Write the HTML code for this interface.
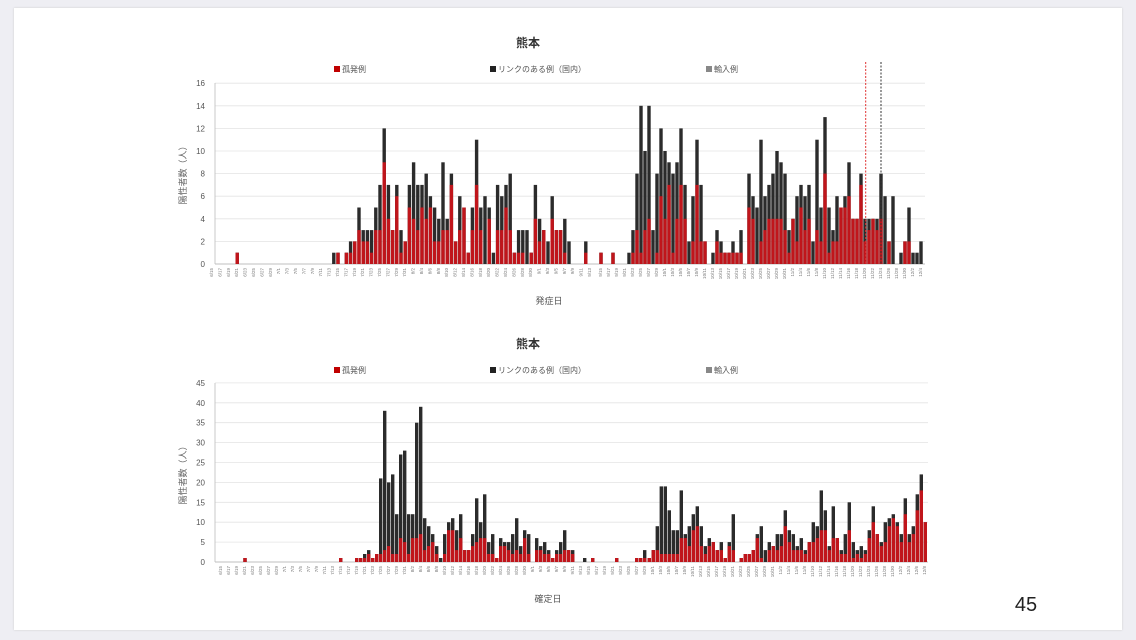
<!DOCTYPE html>
<html><head><meta charset="utf-8">
<style>
html,body{margin:0;padding:0;background:#eeeef3;}
body{width:1136px;height:640px;position:relative;overflow:hidden;font-family:"Liberation Sans","Noto Sans CJK JP",sans-serif;}
#slide{position:absolute;left:14px;top:8px;width:1108px;height:622px;background:#fff;box-shadow:0 0 2px #ccc;}
svg{position:absolute;left:0;top:0;}
</style></head><body>
<div id="slide"></div>
<svg id="s" width="1136" height="640" xmlns="http://www.w3.org/2000/svg" font-family="Liberation Sans, Noto Sans CJK JP, sans-serif">
<text x="528" y="47" font-size="12" font-weight="bold" text-anchor="middle" fill="#333">熊本</text>
<rect x="334" y="66" width="6" height="6" fill="#c00000"/><text x="342" y="72" font-size="8" fill="#555">孤発例</text>
<rect x="490" y="66" width="6" height="6" fill="#222"/><text x="498" y="72" font-size="8" fill="#555">リンクのある例（国内）</text>
<rect x="706" y="66" width="6" height="6" fill="#888"/><text x="714" y="72" font-size="8" fill="#555">輸入例</text>
<text x="549" y="304" font-size="9" text-anchor="middle" fill="#555">発症日</text>
<text transform="translate(186,173) rotate(-90)" font-size="9" text-anchor="middle" fill="#666">陽性者数（人）</text>
<text x="528" y="348" font-size="12" font-weight="bold" text-anchor="middle" fill="#333">熊本</text>
<rect x="334" y="367" width="6" height="6" fill="#c00000"/><text x="342" y="373" font-size="8" fill="#555">孤発例</text>
<rect x="490" y="367" width="6" height="6" fill="#222"/><text x="498" y="373" font-size="8" fill="#555">リンクのある例（国内）</text>
<rect x="706" y="367" width="6" height="6" fill="#888"/><text x="714" y="373" font-size="8" fill="#555">輸入例</text>
<text x="548" y="602" font-size="9" text-anchor="middle" fill="#555">確定日</text>
<text transform="translate(186,473) rotate(-90)" font-size="9" text-anchor="middle" fill="#666">陽性者数（人）</text>
<text x="1026" y="611" font-size="20" text-anchor="middle" fill="#222">45</text>
<g id="g"></g>
</svg>
<script>
(function(){
var g=document.getElementById("g"),h="";
function R(x,y,w,hh,c){h+='<rect x="'+x.toFixed(1)+'" y="'+y.toFixed(1)+'" width="'+w+'" height="'+Math.max(0,hh).toFixed(1)+'" fill="'+c+'"/>';}
function T(x,y,s,t,a,c,extra){h+='<text x="'+x+'" y="'+y+'" font-size="'+s+'" text-anchor="'+(a||"start")+'" fill="'+(c||"#555")+'" '+(extra||"")+'>'+t+'</text>';}
function dstr(d){var m=[30,31,31,30,31,30,31],mo=6,day=15+d;var i=0;while(day>m[i]){day-=m[i];i++;mo++;}return mo+"/"+day;}
var b0=264,u=11.3;
for(var v=0;v<=16;v+=2){var y=b0-v*u;h+='<line x1="215" x2="925" y1="'+y+'" y2="'+y+'" stroke="'+(v?"#e4e4e4":"#aaa")+'" stroke-width="0.8"/>';T(205,y+3,8,v,"end","#555");}
h+='<line x1="215" x2="215" y1="83" y2="264" stroke="#bbb" stroke-width="0.8"/>';
var tdata=[[6,1,1],[29,1,0],[30,1,1],[32,1,1],[33,2,1],[34,2,2],[35,5,3],[36,3,2],[37,3,2],[38,3,1],[39,5,3],[40,7,3],[41,12,9],[42,7,4],[43,3,3],[44,7,6],[45,3,1],[46,2,2],[47,7,5],[48,9,4],[49,7,3],[50,7,5],[51,8,4],[52,6,5],[53,5,2],[54,4,2],[55,9,3],[56,4,3],[57,8,7],[58,2,2],[59,6,3],[60,5,5],[61,1,1],[62,5,3],[63,11,7],[64,5,3],[65,6,0],[66,5,4],[67,1,0],[68,7,3],[69,6,3],[70,7,5],[71,8,3],[72,1,1],[73,3,1],[74,3,1],[75,3,0],[76,1,1],[77,7,4],[78,4,2],[79,3,3],[80,2,0],[81,6,4],[82,3,3],[83,3,3],[84,4,1],[85,2,0],[89,2,1],
[92,1,1],[95,1,1],[99,1,0],[100,3,1],[101,8,3],[102,14,1],[103,10,3],[104,14,4],[105,3,0],[106,8,1],[107,12,6],[108,10,4],[109,9,7],[110,8,1],[111,9,4],[112,12,7],[113,7,4],[114,2,0],[115,6,2],[116,11,7],[117,7,2],[118,2,2],[120,1,0],[121,3,2],[122,2,1],[123,1,1],[124,1,1],[125,2,1],[126,1,1],[127,3,1],[129,8,5],[130,6,4],[131,5,0],[132,11,2],[133,6,3],[134,7,4],[135,8,4],[136,10,4],[137,9,4],[138,8,3],[139,3,1],[140,4,4],[141,6,2],[142,7,5],[143,6,3],[144,7,4],[145,2,0],[146,11,3],[147,5,2],[148,13,8],[149,5,1],[150,3,2],[151,6,2],[152,5,5],[153,6,5],[154,9,6],[155,4,4],[156,4,4],[157,8,7],[158,4,2],[159,4,3],[160,4,4],[161,4,3],[162,8,4],[163,6,0],[164,2,2],[165,6,0],[167,1,0],[168,2,2],[169,5,2],[170,1,0],[171,1,0],[172,2,0]];
function xt(k){return k<92?212+4.2*k:601+4*(k-92);}
tdata.forEach(function(a){var x=xt(a[0])-1.7;R(x,b0-a[1]*u,3.4,a[1]*u,"#2b2b2b");R(x,b0-a[2]*u,3.4,a[2]*u,"#c0151b");});
for(var k=0;k<=172;k+=2){var x=xt(k)+1;T(0,0,4.5,dstr(k),"end","#777",'transform="translate('+x.toFixed(1)+',268) rotate(-90)"');}
h+='<line x1="865.7" x2="865.7" y1="62" y2="264" stroke="#e03030" stroke-width="1" stroke-dasharray="2,1.5"/>';
h+='<line x1="881" x2="881" y1="62" y2="264" stroke="#333" stroke-width="1" stroke-dasharray="2,1.5"/>';
var b1=562,u1=3.98;
for(var v=0;v<=45;v+=5){var y=b1-v*u1;h+='<line x1="215" x2="928" y1="'+y+'" y2="'+y+'" stroke="'+(v?"#e4e4e4":"#aaa")+'" stroke-width="0.8"/>';T(205,y+3,8,v,"end","#555");}
h+='<line x1="215" x2="215" y1="383" y2="562" stroke="#bbb" stroke-width="0.8"/>';
var b3=[[225,1,1],[512,1,1],[560,1,1],[572,1,1],[584,2,1],[596,3,2],[608,1,1],[620,2,2],[632,21,2],[644,38,3],[656,20,4],[668,22,2],[680,12,2],[692,27,6],[704,28,5],[716,12,2],[728,12,6],[740,35,6],[752,39,7],[764,11,3],[776,9,4],[788,7,5],[800,4,2],[812,1,0],[824,7,2],[836,10,8],[848,11,8],[860,8,3],[872,12,6],[884,3,3],[896,3,3],[908,7,4],[920,16,5],[932,10,6],[944,17,6],[956,5,2],[968,7,2],[980,1,1],[992,6,4],[1004,5,4],[1016,5,3],[1028,7,2],[1040,11,3],[1052,4,2],[1064,8,6],[1076,7,2],[1100,6,3],[1112,4,3],[1124,5,2],[1136,3,2],[1148,1,1],[1160,3,2],[1172,5,2],[1184,8,3],[1196,3,3],[1208,3,2],[1244,1,0],[1268,1,1],[1340,1,1],[1400,1,1],[1412,1,1],[1424,3,1]];
b3.forEach(function(a){var x=170+a[0]/3-1.7;R(x,b1-a[1]*u1,3.4,a[1]*u1,"#2b2b2b");R(x,b1-a[2]*u1,3.4,a[2]*u1,"#c0151b");});
var b4=[[148,1,1],[160,3,3],[172,9,3],[184,19,2],[196,19,2],[208,13,2],[220,8,2],[232,8,2],[244,18,6],[256,7,6],[268,9,4],[280,12,8],[292,14,9],[304,9,4],[316,4,2],[328,6,4],[340,5,5],[352,3,3],[364,5,3],[376,1,1],[388,5,4],[400,12,3],[424,1,1],[436,2,2],[448,2,2],[460,3,3],[472,7,6],[484,9,1],[496,3,0],[508,5,3],[520,4,4],[532,7,3],[544,7,4],[556,13,9],[568,8,5],[580,7,3],[592,4,3],[604,6,3],[616,3,2],[628,5,5],[640,10,5],[652,9,6],[664,18,8],[676,13,8],[688,4,3],[700,14,6],[712,6,6],[724,3,2],[736,7,2],[748,15,8],[760,5,1],[772,3,2],[784,4,1],[796,3,2],[808,8,6],[820,14,10],[832,7,7],[844,5,4],[856,10,5],[868,11,9],[880,12,11],[892,10,9],[904,7,5],[916,16,12],[928,7,5],[940,9,7],[952,17,13],[964,22,18],[976,10,10]];
b4.forEach(function(a){var x=600+a[0]/3-1.7;R(x,b1-a[1]*u1,3.4,a[1]*u1,"#2b2b2b");R(x,b1-a[2]*u1,3.4,a[2]*u1,"#c0151b");});
for(var d=0;d<=177;d+=2){var x=245+4*(d-6)+1;if(x>927)break;T(0,0,4.5,dstr(d),"end","#777",'transform="translate('+x.toFixed(1)+',566) rotate(-90)"');}
g.innerHTML=h;
})();
</script>
</body></html>
